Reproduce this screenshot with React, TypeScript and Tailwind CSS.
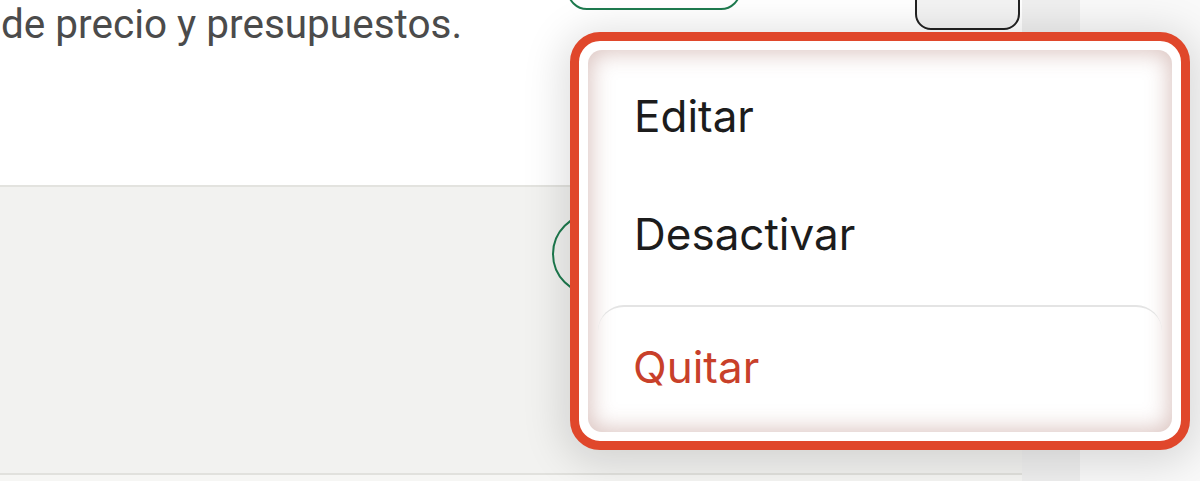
import React from 'react';

const ActionsMenu: React.FC = () => (
  <div className="absolute left-[570px] top-[32px] w-[620px] h-[418px] rounded-[30px] border-[9px] border-[#e0472b] bg-white p-[9px] shadow-[0_6px_40px_8px_rgba(0,0,0,0.13)]">
    <div className="flex h-full flex-col rounded-[14px] bg-white pt-[7px] shadow-[inset_0_0_22px_3px_rgba(175,125,115,0.45)] font-['Inter',sans-serif] text-[44px] leading-[44px]">
      <div className="flex h-[118px] items-center pl-[46px] text-[#1c1c1c]">Editar</div>
      <div className="flex h-[118px] items-center pl-[46px] text-[#1c1c1c]">Desactivar</div>
      <div className="mx-[10px] mt-[12px] flex-1 rounded-t-[26px] border-t-2 border-[#e4e4e4] pl-[35px] pt-[38px] text-[#c8402a]">
        Quitar
      </div>
    </div>
  </div>
);

export default function App() {
  return (
    <div className="relative flex h-[481px] w-[1200px] overflow-hidden bg-[#f9f9f9]">
      <div className="flex w-[1080px] shrink-0">
        <div className="flex w-[1022px] flex-col bg-[#f6f6f4]">
          <div className="flex h-[187px] shrink-0 items-start border-b-2 border-[#e3e3df] bg-white">
            <p className="mt-[4px] ml-[1px] w-[560px] whitespace-nowrap font-['Roboto',sans-serif] text-[40.5px] leading-[40px] text-[#4b4b4b]">
              de precio y presupuestos.
            </p>
            <div className="ml-[6px] mt-[-46px] h-[56px] w-[174px] rounded-[20px] border-2 border-[#1d7a4e] bg-white" />
            <div className="ml-[174px] mt-[-26px] h-[56px] w-[105px] rounded-[16px] border-2 border-[#222] bg-[#f3f3f3]" />
          </div>
          <div className="flex h-[288px] shrink-0 items-start border-b-2 border-[#e1e1dd] bg-[#f2f2f0] pl-[552px] pt-[26px]">
            <div className="h-[82px] w-[180px] rounded-full border-2 border-[#1d7a4e]" />
          </div>
        </div>
        <div className="w-[58px] bg-[#efefef]" />
      </div>
      <div className="flex-1 bg-[#f9f9f9]" />
      <ActionsMenu />
    </div>
  );
}
